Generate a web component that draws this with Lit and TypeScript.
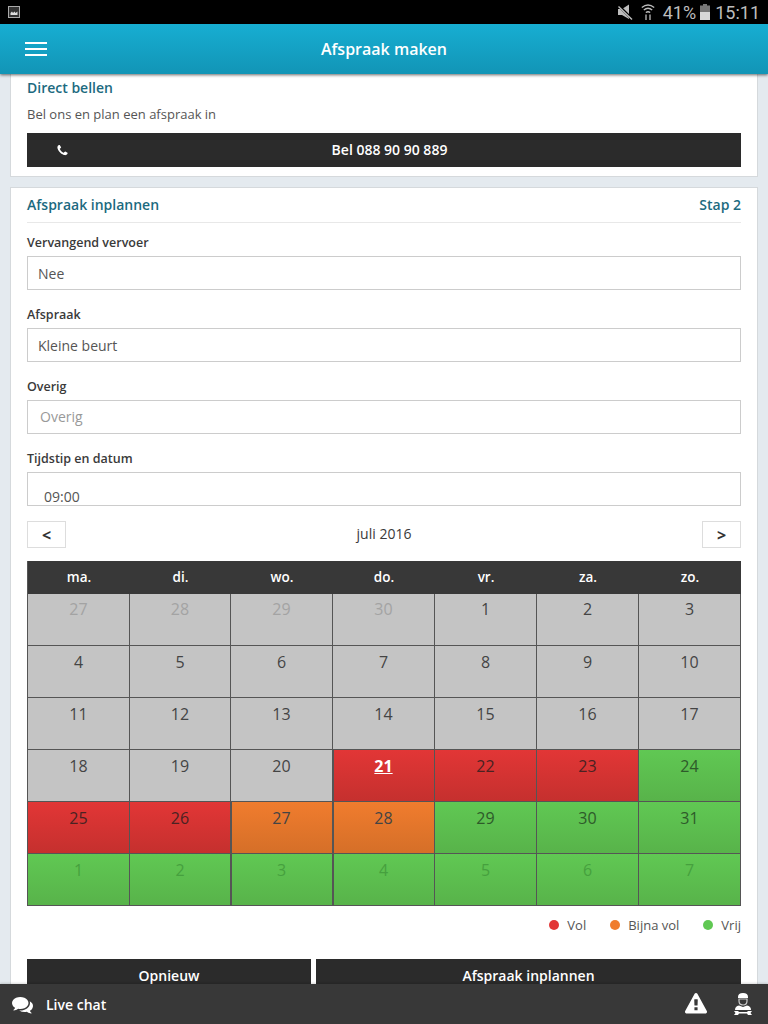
import { LitElement, css, html, svg } from 'lit'
import { customElement } from 'lit/decorators.js'

type Day = { n: number; kind: string; faded?: boolean; today?: boolean }

const legenda = [
  { label: 'Vol', kleur: '#e23636' },
  { label: 'Bijna vol', kleur: '#f07c2e' },
  { label: 'Vrij', kleur: '#60c853' },
]

const weekdagen = ['ma.', 'di.', 'wo.', 'do.', 'vr.', 'za.', 'zo.']

function maakDagen(): Day[] {
  const dagen: Day[] = []
  for (const n of [27, 28, 29, 30]) dagen.push({ n, kind: 'grijs', faded: true })
  for (let n = 1; n <= 20; n++) dagen.push({ n, kind: 'grijs' })
  dagen.push({ n: 21, kind: 'rood', today: true })
  dagen.push({ n: 22, kind: 'rood' })
  dagen.push({ n: 23, kind: 'rood' })
  dagen.push({ n: 24, kind: 'groen' })
  dagen.push({ n: 25, kind: 'rood' })
  dagen.push({ n: 26, kind: 'rood' })
  dagen.push({ n: 27, kind: 'oranje' })
  dagen.push({ n: 28, kind: 'oranje' })
  for (let n = 29; n <= 31; n++) dagen.push({ n, kind: 'groen' })
  for (let n = 1; n <= 7; n++) dagen.push({ n, kind: 'groen', faded: true })
  return dagen
}

const phonePath = 'M1600 1240q0 27-10 70.5t-21 68.5q-21 50-122 106-94 51-186 51-27 0-53-3.5t-57.5-12.5-47-14.5-55.5-20.5-49-18q-98-35-175-83-127-79-264-216t-216-264q-48-77-83-175-3-9-18-49t-20.5-55.5-14.5-47-12.5-57.5-3.5-53q0-92 51-186 56-101 106-122 25-11 68.5-21t70.5-10q14 0 21 3 18 6 53 76 11 19 30 54t35 63.5 31 53.5q3 4 17.5 25t21.5 35.5 7 28.5q0 20-28.5 50t-62 55-62 53-28.5 46q0 9 5 22.5t8.5 20.5 14 24 11.5 19q76 137 174 235t235 174q2 1 19 11.5t24 14 20.5 8.5 22.5 5q18 0 46-28.5t53-62 55-62 50-28.5q14 0 28.5 7t35.5 21.5 25 17.5q25 15 53.5 31t63.5 35 54 30q70 35 76 53 3 7 3 21z'
const commentsPath = 'M1408 768q0 139-94 257t-256.5 186.5-353.5 68.5q-86 0-176-16-124 88-278 128-36 9-86 16h-3q-11 0-20.5-8t-11.5-21q-1-3-1-6.5t.5-6.5 2-6l2.5-5 3.5-5.5 4-5 4.5-5 4-4.5q5-6 23-25t26-29.5 22.5-29 25-38.5 20.5-44q-124-72-195-177t-71-224q0-139 94-257t256.5-186.5 353.5-68.5 353.5 68.5 256.5 186.5 94 257zm384 256q0 120-71 224.5t-195 176.5q10 24 20.5 44t25 38.5 22.5 29 26 29.5 23 25q1 1 4 4.5t4.5 5 4 5 3.5 5.5l2.5 5 2 6 .5 6.5-1 6.5q-3 14-13 22t-22 7q-50-7-86-16-154-40-278-128-90 16-176 16-271 0-472-132 58 4 88 4 161 0 309-45t264-129q125-92 192-212t67-254q0-77-23-152 129 71 204 178t75 230z'
const warningPath = 'M1024 1375v-190q0-14-9.5-23.5t-22.5-9.5h-192q-13 0-22.5 9.5t-9.5 23.5v190q0 14 9.5 23.5t22.5 9.5h192q13 0 22.5-9.5t9.5-23.5zm-2-374l18-459q0-12-10-19-13-11-24-11h-220q-11 0-24 11-10 7-10 21l17 457q0 10 10 16.5t24 6.5h185q14 0 23.5-6.5t10.5-16.5zm-14-934l768 1408q35 63-2 126-17 29-46.5 46t-63.5 17h-1536q-34 0-63.5-17t-46.5-46q-37-63-2-126l768-1408q17-31 47-49t65-18 65 18 47 49z'

const faIcon = (d: string, size: number) => html`<svg width=${size} height=${size} viewBox="0 0 1792 1792" fill="#fff">${svg`<path d=${d}></path>`}</svg>`

@customElement('app-root')
export class AppRoot extends LitElement {
  static styles = css`
    :host {
      display: flex;
      flex-direction: column;
      height: 1024px;
      overflow: hidden;
      background: #e4eaef;
      font-family: "Open Sans", sans-serif;
      font-size: 13px;
      color: #444;
    }
    .status {
      height: 24px;
      flex: none;
      background: #000;
      display: flex;
      align-items: center;
      padding: 0 8px;
      color: #bdbdbd;
    }
    .status .rechts {
      margin-left: auto;
      display: flex;
      align-items: center;
      font-family: Roboto, sans-serif;
      font-size: 18px;
    }
    .wifi { margin-left: 8px; }
    .procent { margin-left: 8px; }
    .batterij { margin: 0 5px 0 4px; }
    .kop {
      height: 50px;
      flex: none;
      position: relative;
      z-index: 2;
      background: linear-gradient(#17aed2, #1295b6);
      box-shadow: 0 1px 3px rgba(0, 0, 0, 0.6);
      display: flex;
      align-items: center;
      justify-content: center;
      color: #fff;
      font-size: 16px;
      font-weight: 600;
    }
    .hamburger {
      position: absolute;
      left: 25px;
      top: 18px;
      width: 22px;
      height: 14px;
      display: flex;
      flex-direction: column;
      justify-content: space-between;
    }
    .hamburger span { height: 2px; background: #fff; }
    .inhoud {
      flex: 1;
      min-height: 0;
      overflow: hidden;
      padding: 0 10px;
    }
    .kaart {
      background: #fff;
      border: 1px solid #d5d9dc;
      border-top: 0;
      padding: 0 16px;
    }
    .bel { box-sizing: border-box; height: 103px; margin-bottom: 10px; }
    .kaart h2 {
      margin: 0;
      font-size: 14px;
      font-weight: 600;
      color: #1c6a80;
      line-height: 20px;
    }
    .bel h2 { padding-top: 4px; }
    .bel p { margin: 6px 0 0; font-size: 13px; line-height: 20px; height: 29px; color: #555; }
    .knop {
      box-sizing: border-box;
      background: #2b2b2b;
      color: #fff;
      font-weight: 600;
      font-size: 14px;
      display: flex;
      align-items: center;
      justify-content: center;
      height: 34px;
      padding-bottom: 2px;
      position: relative;
    }
    .knop.met-icoon { padding-left: 11px; }
    .knop svg { position: absolute; left: 29px; top: 11px; }
    .afspraak { border-top: 1px solid #d5d9dc; }
    .stap-kop {
      box-sizing: border-box;
      display: flex;
      justify-content: space-between;
      align-items: center;
      height: 35px;
      border-bottom: 1px solid #e8e8e8;
    }
    .veld { padding-top: 9px; }
    .veld label {
      display: block;
      height: 24px;
      line-height: 21px;
      font-size: 12.5px;
      font-weight: 600;
      color: #3a3a3a;
    }
    .invoer {
      height: 34px;
      box-sizing: border-box;
      border: 1px solid #ccc;
      padding: 0 10px;
      line-height: 34px;
      font-size: 14px;
      color: #555;
      overflow: hidden;
    }
    .veld + .veld { padding-top: 14px; }
    .invoer.leeg { color: #999; padding-left: 12px; line-height: 32px; }
    .invoer.tijd { padding: 8px 16px 0; line-height: 32px; }
    .maand {
      display: flex;
      align-items: center;
      justify-content: space-between;
      margin-top: 15px;
      height: 27px;
      font-size: 14px;
      color: #3a3a3a;
    }
    .maand span { position: relative; top: -1px; }
    .pijl {
      width: 39px;
      height: 27px;
      box-sizing: border-box;
      border: 1px solid #ddd;
      display: flex;
      align-items: center;
      justify-content: center;
      font-weight: 700;
      font-size: 16px;
      color: #333;
    }
    .kalender {
      margin-top: 13px;
      display: grid;
      grid-template-columns: 102px 101px repeat(5, 102px);
      border-left: 1px solid #555;
    }
    .wd {
      box-sizing: border-box;
      height: 33px;
      padding-bottom: 1px;
      background: #383838;
      color: #fff;
      font-weight: 600;
      font-size: 13.5px;
      display: flex;
      align-items: center;
      justify-content: center;
    }
    .dag {
      height: 52px;
      box-sizing: border-box;
      border-right: 1px solid #555;
      border-bottom: 1px solid #555;
      text-align: center;
      font-size: 16px;
      line-height: 20px;
      padding-top: 6px;
      color: #444;
    }
    .dag.eerste { padding-top: 5px; }
    .dag.dik { box-shadow: inset 1px 0 0 #555; }
    .grijs { background: #c4c4c4; }
    .rood { background: linear-gradient(#e23636, #c5302e); color: #4a2222; }
    .oranje { background: linear-gradient(#f07c2e, #d56f28); }
    .groen { background: linear-gradient(#60c853, #58b34a); color: #2e5a2a; }
    .dag.vaag { color: #a3a3a3; }
    .dag.groen.vaag { color: #46a03e; }
    .dag.vandaag { color: #fff; font-weight: 700; text-decoration: underline; }
    .legenda {
      display: flex;
      justify-content: flex-end;
      align-items: center;
      gap: 24px;
      height: 38px;
      font-size: 13px;
      color: #555;
    }
    .legenda div { display: flex; align-items: center; gap: 8px; }
    .legenda i { width: 10px; height: 10px; border-radius: 50%; display: block; }
    .acties {
      display: grid;
      grid-template-columns: 284px 425px;
      gap: 5px;
      margin-top: 15px;
    }
    .voet {
      height: 40px;
      flex: none;
      position: relative;
      z-index: 2;
      background: #383838;
      box-shadow: 0 -1px 2px rgba(0, 0, 0, 0.15);
      display: flex;
      align-items: center;
      padding: 0 15px 0 12px;
      color: #fff;
      font-weight: 600;
      font-size: 14px;
    }
    .voet .chat { margin-left: 13px; }
    .voet .rechts { margin-left: auto; display: flex; align-items: center; gap: 26px; }
  `

  render() {
    return html`
      <div class="status">
        <svg width="12" height="12" viewBox="0 0 12 12">
          <rect x="0.5" y="0.5" width="11" height="11" fill="#333" stroke="#aaa"></rect>
          <path d="M2.5 9 V7 L4 5.5 L5 7 L6.5 5.5 L7.5 7 L9.5 5.5 V9 Z" fill="#ddd"></path>
        </svg>
        <div class="rechts">
          <svg width="16" height="16" viewBox="0 0 16 16" fill="#bdbdbd">
            <path d="M1 5 H5 L12 0.5 V15 L5 11 H1 Z"></path>
            <path d="M1 1 L15 15" stroke="#000" stroke-width="2.6"></path>
            <path d="M1.5 2.5 L15 15.5" stroke="#bdbdbd" stroke-width="1.4"></path>
          </svg>
          <svg class="wifi" width="14" height="18" viewBox="0 0 14 18" fill="none" stroke="#bdbdbd" stroke-width="1.3">
            <path d="M0.8 4.5 Q7 -0.5 13.2 4.5"></path>
            <path d="M2.8 7 Q7 3.5 11.2 7"></path>
            <path d="M4.8 9.5 Q7 8 9.2 9.5"></path>
            <path d="M5 11.5 V17 M9 11.5 V17" stroke="#888" stroke-width="1.8"></path>
          </svg>
          <span class="procent">41%</span>
          <svg class="batterij" width="10" height="16" viewBox="0 0 10 16">
            <rect x="3" y="0" width="4" height="2" fill="#777"></rect>
            <rect x="0" y="1.5" width="10" height="6.5" fill="#777"></rect>
            <rect x="0" y="8" width="10" height="8" fill="#d8d8d8"></rect>
          </svg>
          <span>15:11</span>
        </div>
      </div>

      <div class="kop">
        <div class="hamburger"><span></span><span></span><span></span></div>
        Afspraak maken
      </div>

      <div class="inhoud">
        <div class="kaart bel">
          <h2>Direct bellen</h2>
          <p>Bel ons en plan een afspraak in</p>
          <div class="knop met-icoon">${faIcon(phonePath, 13)}Bel 088 90 90 889</div>
        </div>

        <div class="kaart afspraak">
          <div class="stap-kop"><h2>Afspraak inplannen</h2><h2>Stap 2</h2></div>
          <div class="veld"><label>Vervangend vervoer</label><div class="invoer">Nee</div></div>
          <div class="veld"><label>Afspraak</label><div class="invoer">Kleine beurt</div></div>
          <div class="veld"><label>Overig</label><div class="invoer leeg">Overig</div></div>
          <div class="veld"><label>Tijdstip en datum</label><div class="invoer tijd">09:00</div></div>

          <div class="maand">
            <div class="pijl">&lt;</div>
            <span>juli 2016</span>
            <div class="pijl">&gt;</div>
          </div>

          <div class="kalender">
            ${weekdagen.map((d) => html`<div class="wd">${d}</div>`)}
            ${maakDagen().map((d, i) => html`
              <div class="dag ${d.kind} ${d.faded ? 'vaag' : ''} ${d.today ? 'vandaag' : ''} ${i < 7 ? 'eerste' : ''} ${(i % 7 === 2 && i >= 28) || (i % 7 === 3 && i >= 21) ? 'dik' : ''}">${d.n}</div>
            `)}
          </div>

          <div class="legenda">
            ${legenda.map((l) => html`<div><i style="background:${l.kleur}"></i>${l.label}</div>`)}
          </div>

          <div class="acties">
            <div class="knop">Opnieuw</div>
            <div class="knop">Afspraak inplannen</div>
          </div>
        </div>
      </div>

      <div class="voet">
        ${faIcon(commentsPath, 21)}
        <span class="chat">Live chat</span>
        <div class="rechts">
          ${faIcon(warningPath, 22)}
          <svg width="20" height="24" viewBox="0 0 20 24" fill="#fff">
            <path d="M5 5 Q5 1 10 1 Q15 1 15 5 V6 H5 Z"></path>
            <path d="M6 7 H14 V9 Q14 13 10 13 Q6 13 6 9 Z" fill="none" stroke="#ccc" stroke-width="1.2"></path>
            <path d="M2 18 Q2 14 6 13.5 L10 15 L14 13.5 Q18 14 18 18 Z"></path>
            <path d="M1 19 H5 L6 20 H14 L15 19 H19 L17.5 21 L19 23 H15 L14 21.6 H6 L5 23 H1 L2.5 21 Z"></path>
          </svg>
        </div>
      </div>
    `
  }
}
